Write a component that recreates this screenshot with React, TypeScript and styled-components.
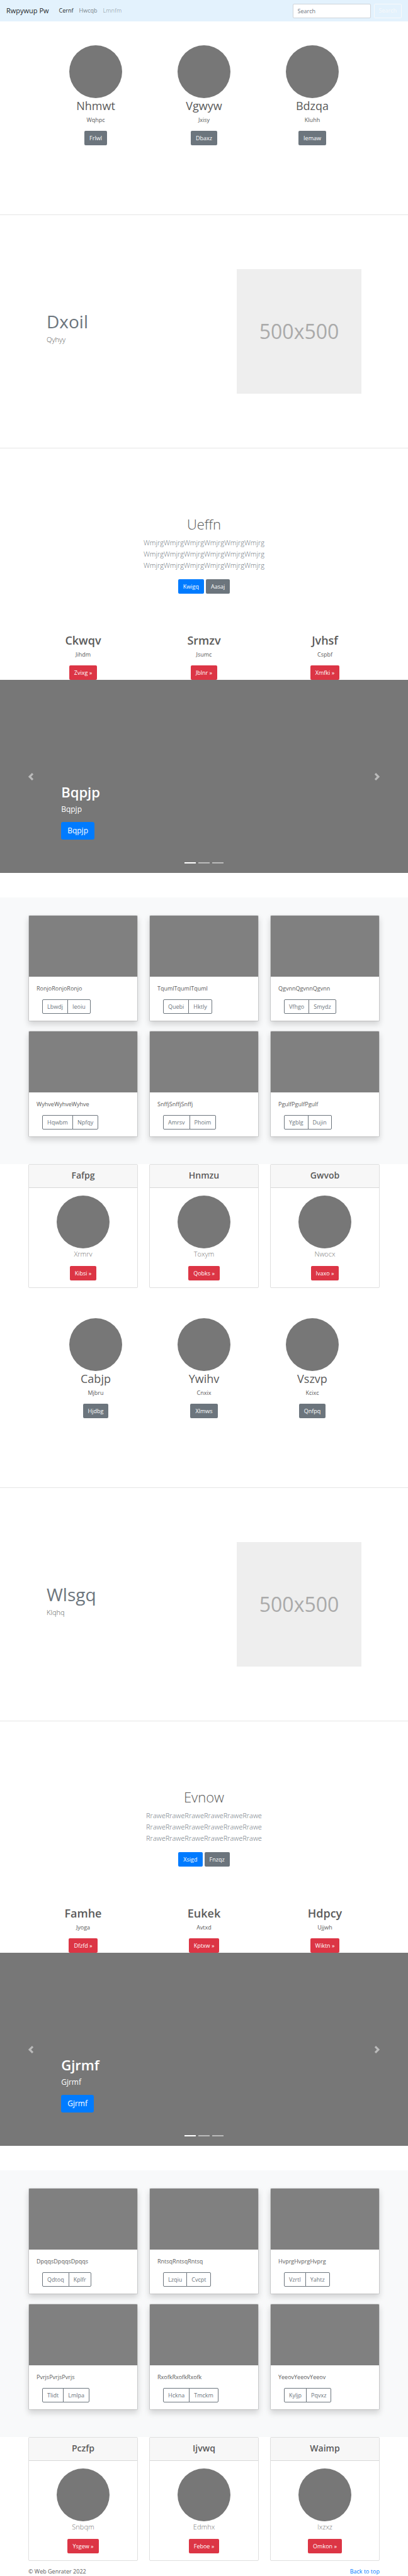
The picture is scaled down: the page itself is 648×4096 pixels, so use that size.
import React from "react";
import styled, { createGlobalStyle, css } from "styled-components";

const GlobalStyle = createGlobalStyle`
  *, *::before, *::after { box-sizing: border-box; }
  body {
    margin: 0;
    background: #fff;
    color: #5a5a5a;
    font-family: "Open Sans", "Noto Sans", sans-serif;
    font-size: 9px;
    line-height: 14px;
  }
  h1, h2, h3, h4, p { margin: 0; }
  a { text-decoration: none; }
`;

/* ---------- shared pieces ---------- */

type Tone = "primary" | "secondary" | "danger";

const tones: Record<Tone, string> = {
  primary: "#007bff",
  secondary: "#6c757d",
  danger: "#dc3545",
};

const Button = styled.button<{ $tone: Tone; $large?: boolean }>`
  height: 23px;
  padding: 0 8px;
  border: 0;
  border-radius: 2px;
  background: ${(p) => tones[p.$tone]};
  color: #fff;
  font: inherit;
  white-space: nowrap;
  cursor: pointer;
  ${(p) =>
    p.$large &&
    css`
      height: 28px;
      padding: 0 10px;
      border-radius: 3px;
      font-size: 12px;
    `}
`;

const Container = styled.div`
  max-width: 558px;
  margin: 0 auto;
`;

const Columns = styled(Container)`
  display: grid;
  grid-template-columns: repeat(3, 1fr);
  gap: 15px 18px;
`;

const Avatar = styled.div`
  width: 84px;
  height: 84px;
  border-radius: 50%;
  background: #777;
`;

const Divider = styled.hr`
  height: 1px;
  margin: 0;
  border: 0;
  background: rgba(0, 0, 0, 0.1);
`;

/* ---------- navigation ---------- */

const Nav = styled.nav`
  display: flex;
  align-items: center;
  height: 34px;
  padding: 0 10px;
  background: #e3f2fd;
`;

const Brand = styled.a`
  margin-right: 16px;
  color: rgba(0, 0, 0, 0.9);
  font-size: 11px;
  line-height: 18px;
`;

const NavLinks = styled.div`
  display: flex;
  flex: 1;
  gap: 9px;
`;

const NavLink = styled.a<{ $state?: "active" | "disabled" }>`
  color: rgba(
    0,
    0,
    0,
    ${(p) => (p.$state === "active" ? 0.9 : p.$state === "disabled" ? 0.3 : 0.5)}
  );
`;

const SearchForm = styled.form`
  display: flex;
  gap: 5px;
`;

const SearchInput = styled.input`
  width: 124px;
  height: 23px;
  padding: 0 7px;
  border: 1px solid #ced4da;
  border-radius: 2px;
  background: #fff;
  color: #495057;
  font: inherit;
  &::placeholder {
    color: #6c757d;
    opacity: 1;
  }
`;

const SearchButton = styled.button`
  height: 23px;
  padding: 0 7px;
  border: 1px solid #f8f9fa;
  border-radius: 2px;
  background: transparent;
  color: #f8f9fa;
  font: inherit;
`;

/* ---------- profile trio ---------- */

const Profiles = styled.section`
  display: grid;
  grid-template-columns: repeat(3, 1fr);
  max-width: 516px;
  margin: 0 auto;
  padding: 38px 0 110px;
`;

const Centered = styled.div`
  display: flex;
  flex-direction: column;
  align-items: center;
  text-align: center;
`;

const Heading = styled.h2<{ $strong?: boolean }>`
  margin-bottom: 4px;
  font-size: 18px;
  line-height: 24px;
  font-weight: ${(p) => (p.$strong ? 600 : 400)};
`;

const Text = styled.p`
  margin-bottom: 10px;
`;

/* ---------- featurette ---------- */

const Featurette = styled.section`
  display: flex;
  align-items: center;
  justify-content: space-between;
  max-width: 500px;
  margin: 0 auto;
  padding: 86px 0;
`;

const FeatureTitle = styled.h2`
  margin-bottom: 5px;
  color: #6c757d;
  font-size: 28px;
  line-height: 30px;
  font-weight: 400;
`;

const Lead = styled.p`
  margin-bottom: 10px;
  font-size: 11px;
  line-height: 18px;
  font-weight: 300;
`;

const Placeholder = styled.div`
  display: grid;
  place-items: center;
  width: 198px;
  height: 198px;
  background: #eee;
  color: #aaa;
  font-size: 32px;
  line-height: 40px;
`;

/* ---------- jumbotron ---------- */

const Jumbotron = styled.section`
  padding: 106px 0 62px;
  text-align: center;
`;

const JumboTitle = styled.h1`
  margin-bottom: 6px;
  font-size: 22px;
  line-height: 29px;
  font-weight: 300;
`;

const JumboLine = styled.p`
  color: #6c757d;
  font-size: 11px;
  line-height: 18px;
  font-weight: 300;
`;

const ButtonRow = styled.div`
  display: flex;
  justify-content: center;
  gap: 3px;
  margin-top: 13px;
`;

/* ---------- carousel ---------- */

const CarouselFrame = styled.section`
  position: relative;
  display: flex;
  flex-direction: column;
  justify-content: flex-end;
  align-items: flex-start;
  min-height: 307px;
  margin-bottom: 39px;
  padding: 0 15% 53px;
  background: #777;
  color: #fff;
`;

const CarouselTitle = styled.h1`
  margin-bottom: 4px;
  font-size: 22px;
  line-height: 29px;
  font-weight: 600;
`;

const CarouselText = styled.p`
  margin-bottom: 11px;
  font-size: 12px;
  line-height: 18px;
`;

const CarouselArrow = styled.button<{ $side: "left" | "right" }>`
  position: absolute;
  top: 0;
  bottom: 0;
  ${(p) => p.$side}: 0;
  display: flex;
  align-items: center;
  justify-content: center;
  width: 15%;
  padding: 0;
  border: 0;
  background: none;
  opacity: 0.5;
  cursor: pointer;
`;

const Indicators = styled.div`
  position: absolute;
  left: 0;
  right: 0;
  bottom: 15px;
  display: flex;
  justify-content: center;
  gap: 4px;
`;

const Indicator = styled.button<{ $active?: boolean }>`
  width: 18px;
  height: 2px;
  padding: 0;
  border: 0;
  background: #fff;
  opacity: ${(p) => (p.$active ? 1 : 0.5)};
`;

/* ---------- album ---------- */

const Album = styled.section`
  padding: 28px 0 43px;
  background: #f8f9fa;
`;

const AlbumCard = styled.article`
  border: 1px solid rgba(0, 0, 0, 0.125);
  border-radius: 2px;
  background: #fff;
  background-clip: padding-box;
  box-shadow: 0 5px 10px rgba(0, 0, 0, 0.15);
`;

const Thumb = styled.div`
  height: 97px;
  border-radius: 1px 1px 0 0;
  background: #808080;
`;

const AlbumBody = styled.div`
  padding: 12px 12px 11px;
`;

const ButtonGroup = styled.div`
  display: flex;
  margin-left: 9px;
`;

const OutlineButton = styled.button`
  height: 23px;
  padding: 0 7px;
  border: 1px solid #6c757d;
  background: transparent;
  color: #6c757d;
  font: inherit;
  &:first-child {
    border-radius: 2px 0 0 2px;
  }
  &:last-child {
    margin-left: -1px;
    border-radius: 0 2px 2px 0;
  }
`;

/* ---------- header cards ---------- */

const CardRow = styled(Columns)`
  margin-bottom: 10px;
`;

const Card = styled.article`
  border: 1px solid rgba(0, 0, 0, 0.125);
  border-radius: 2px;
`;

const CardHeader = styled.h4`
  padding: 8px 0 11px;
  border-bottom: 1px solid rgba(0, 0, 0, 0.125);
  background: #f7f7f7;
  font-size: 14px;
  line-height: 17px;
  font-weight: 600;
  text-align: center;
`;

const CardBody = styled(Centered)`
  padding: 12px 0 11px;
`;

const CardLabel = styled(Lead)`
  color: #777;
`;

const Footer = styled.footer`
  display: flex;
  justify-content: space-between;
  max-width: 558px;
  margin: 0 auto;
  a {
    color: #007bff;
  }
`;

/* ---------- content ---------- */

type Triple = [string, string, string];

interface PageBlock {
  profiles: Triple[];
  feature: [string, string];
  jumbo: { title: string; line: string; actions: [string, string] };
  teasers: Triple[];
  slide: string;
  album: Triple[];
  cards: Triple[];
}

const blocks: PageBlock[] = [
  {
    profiles: [
      ["Nhmwt", "Wqhpc", "Frlwl"],
      ["Vgwyw", "Jxisy", "Dbaxz"],
      ["Bdzqa", "Kluhh", "Iemaw"],
    ],
    feature: ["Dxoil", "Qyhyy"],
    jumbo: { title: "Ueffn", line: "WmjrgWmjrgWmjrgWmjrgWmjrgWmjrg", actions: ["Kwigq", "Aasaj"] },
    teasers: [
      ["Ckwqv", "Jihdm", "Zvixg »"],
      ["Srmzv", "Jsumc", "Jblnr »"],
      ["Jvhsf", "Cspbf", "Xmfki »"],
    ],
    slide: "Bqpjp",
    album: [
      ["RonjoRonjoRonjo", "Lbwdj", "Ieoiu"],
      ["TqumlTqumlTquml", "Quebi", "Hktly"],
      ["QgvnnQgvnnQgvnn", "Vfhgo", "Smydz"],
      ["WyhveWyhveWyhve", "Hqwbm", "Npfqy"],
      ["SnffjSnffjSnffj", "Amrsv", "Phoim"],
      ["PgulfPgulfPgulf", "Ygblg", "Dujin"],
    ],
    cards: [
      ["Fafpg", "Xrmrv", "Kibsi »"],
      ["Hnmzu", "Toxym", "Qobks »"],
      ["Gwvob", "Nwocx", "Ivaxo »"],
    ],
  },
  {
    profiles: [
      ["Cabjp", "Mjbru", "Hjdbg"],
      ["Ywihv", "Cnxix", "Xlmws"],
      ["Vszvp", "Kcixc", "Qnfpq"],
    ],
    feature: ["Wlsgq", "Klqhq"],
    jumbo: { title: "Evnow", line: "RraweRraweRraweRraweRraweRrawe", actions: ["Xsigd", "Fnzqz"] },
    teasers: [
      ["Famhe", "Jyoga", "Dfzfd »"],
      ["Eukek", "Avtxd", "Kptxw »"],
      ["Hdpcy", "Ujjwh", "Wiktn »"],
    ],
    slide: "Gjrmf",
    album: [
      ["DpqqsDpqqsDpqqs", "Qdtoq", "Kplfr"],
      ["RntsqRntsqRntsq", "Lzqiu", "Cvcpt"],
      ["HvprgHvprgHvprg", "Vzrtl", "Yahtz"],
      ["PvrjsPvrjsPvrjs", "Tlidt", "Lmlpa"],
      ["RxofkRxofkRxofk", "Hckna", "Tmckm"],
      ["YeeovYeeovYeeov", "Kyljp", "Pqvxz"],
    ],
    cards: [
      ["Pczfp", "Snbqm", "Ysgew »"],
      ["Ijvwq", "Edmhx", "Feboe »"],
      ["Waimp", "Ixzxz", "Omkon »"],
    ],
  },
];

const arrowPaths = {
  left: "M5.25 0l-4 4 4 4 1.5-1.5-2.5-2.5 2.5-2.5-1.5-1.5z",
  right: "M2.75 0l-1.5 1.5 2.5 2.5-2.5 2.5 1.5 1.5 4-4-4-4z",
};

function Arrow({ side, label }: { side: "left" | "right"; label: string }) {
  return (
    <CarouselArrow type="button" $side={side} aria-label={label}>
      <svg width="12" height="12" viewBox="0 0 8 8" fill="#fff" aria-hidden="true">
        <path d={arrowPaths[side]} />
      </svg>
    </CarouselArrow>
  );
}

function Block({ data }: { data: PageBlock }) {
  return (
    <>
      <Profiles>
        {data.profiles.map(([title, text, action]) => (
          <Centered key={title}>
            <Avatar />
            <Heading>{title}</Heading>
            <Text>{text}</Text>
            <Button type="button" $tone="secondary">{action}</Button>
          </Centered>
        ))}
      </Profiles>
      <Divider />
      <Featurette>
        <div>
          <FeatureTitle>{data.feature[0]}</FeatureTitle>
          <Lead>{data.feature[1]}</Lead>
        </div>
        <Placeholder>500x500</Placeholder>
      </Featurette>
      <Divider />
      <Jumbotron>
        <JumboTitle>{data.jumbo.title}</JumboTitle>
        <JumboLine>{data.jumbo.line}</JumboLine>
        <JumboLine>{data.jumbo.line}</JumboLine>
        <JumboLine>{data.jumbo.line}</JumboLine>
        <ButtonRow>
          <Button type="button" $tone="primary">{data.jumbo.actions[0]}</Button>
          <Button type="button" $tone="secondary">{data.jumbo.actions[1]}</Button>
        </ButtonRow>
      </Jumbotron>
      <Columns>
        {data.teasers.map(([title, text, action]) => (
          <Centered key={title}>
            <Heading $strong>{title}</Heading>
            <Text>{text}</Text>
            <Button type="button" $tone="danger">{action}</Button>
          </Centered>
        ))}
      </Columns>
      <CarouselFrame>
        <CarouselTitle>{data.slide}</CarouselTitle>
        <CarouselText>{data.slide}</CarouselText>
        <Button type="button" $tone="primary" $large>{data.slide}</Button>
        <Arrow side="left" label="Previous" />
        <Arrow side="right" label="Next" />
        <Indicators>
          <Indicator type="button" $active aria-label="Slide 1" />
          <Indicator type="button" aria-label="Slide 2" />
          <Indicator type="button" aria-label="Slide 3" />
        </Indicators>
      </CarouselFrame>
      <Album>
        <Columns>
          {data.album.map(([text, first, second]) => (
            <AlbumCard key={text}>
              <Thumb />
              <AlbumBody>
                <Text>{text}</Text>
                <ButtonGroup>
                  <OutlineButton type="button">{first}</OutlineButton>
                  <OutlineButton type="button">{second}</OutlineButton>
                </ButtonGroup>
              </AlbumBody>
            </AlbumCard>
          ))}
        </Columns>
      </Album>
      <CardRow>
        {data.cards.map(([title, text, action]) => (
          <Card key={title}>
            <CardHeader>{title}</CardHeader>
            <CardBody>
              <Avatar />
              <CardLabel>{text}</CardLabel>
              <Button type="button" $tone="danger">{action}</Button>
            </CardBody>
          </Card>
        ))}
      </CardRow>
    </>
  );
}

export default function App() {
  return (
    <>
      <GlobalStyle />
      <Nav id="top">
        <Brand href="#top">Rwpywup Pw</Brand>
        <NavLinks>
          <NavLink href="#top" $state="active">Cernf</NavLink>
          <NavLink href="#top">Hwcqb</NavLink>
          <NavLink href="#top" $state="disabled">Lmnfm</NavLink>
        </NavLinks>
        <SearchForm>
          <SearchInput type="search" placeholder="Search" aria-label="Search" />
          <SearchButton type="button">Search</SearchButton>
        </SearchForm>
      </Nav>
      <main>
        {blocks.map((block) => (
          <Block key={block.slide} data={block} />
        ))}
      </main>
      <Footer>
        <p>© Web Genrater 2022</p>
        <a href="#top">Back to top</a>
      </Footer>
    </>
  );
}
